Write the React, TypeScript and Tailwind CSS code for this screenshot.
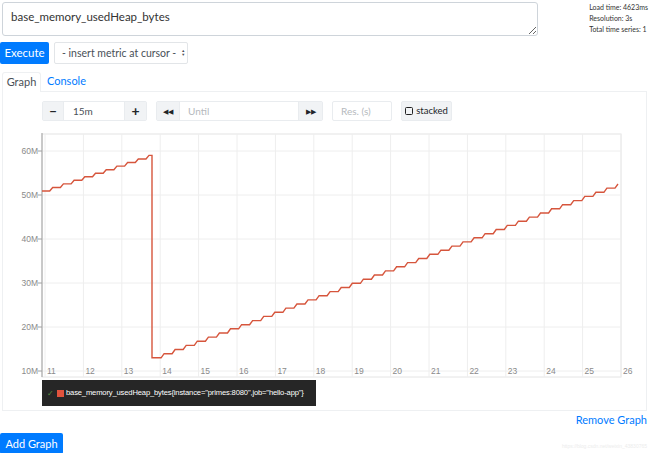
import React from "react";

const ui = { fontFamily: 'Lato, "Segoe UI", "Open Sans", sans-serif' };
const arial = '"Liberation Sans", Arial, sans-serif';

// page coords for the chart
const yOf = (m: number) => 371 - (m - 10) * 4.4;
const tickX = (k: number) => 44 + k * 38.4;

function stairs(x0: number, y0: number, x1: number, y1: number, n: number) {
  const w = (x1 - x0) / n;
  const dy = (y1 - y0) / n;
  let d = "";
  for (let i = 0; i < n; i++) {
    const x = x0 + i * w;
    const y = y0 + i * dy;
    d += ` L${(x + w - 3).toFixed(1)},${y.toFixed(1)} L${(x + w).toFixed(1)},${(y + dy).toFixed(1)}`;
  }
  return d;
}

function Chart() {
  const first = stairs(41, yOf(50.9), 148, yOf(59), 10);
  const second = stairs(152, yOf(13), 617, yOf(52.5), 42);
  const d = `M41,${yOf(50.9)}${first} L151,${yOf(59)} L151,${yOf(13)} L152,${yOf(13)}${second}`;
  const ys = [60, 50, 40, 30, 20, 10];
  const xs = Array.from({ length: 16 }, (_, k) => k);

  return (
    <svg width="640" height="250" viewBox="2 130 640 250" className="block shrink-0">
      <rect x="41" y="134" width="579" height="243" fill="none" stroke="#e4e4e4" />
      {ys.map((v) => (
        <line key={v} x1="41" x2="620" y1={yOf(v)} y2={yOf(v)} stroke="#eeeeee" />
      ))}
      {xs.map((k) => (
        <line key={k} x1={tickX(k)} x2={tickX(k)} y1="134" y2="377" stroke="#eeeeee" />
      ))}
      <line x1="41" x2="41" y1="133" y2="377" stroke="#a0a0a0" />
      {ys.map((v) => (
        <line key={"t" + v} x1="37" x2="41" y1={yOf(v)} y2={yOf(v)} stroke="#a0a0a0" />
      ))}
      {ys.map((v) => (
        <text
          key={"l" + v}
          x="37"
          y={yOf(v) + 3}
          textAnchor="end"
          fontSize="8.5"
          fill="#8a8a8a"
          fontFamily={arial}
        >
          {v}M
        </text>
      ))}
      {xs.map((k) => (
        <text
          key={"x" + k}
          x={tickX(k) + 2}
          y="374"
          fontSize="8.5"
          fill="#8a8a8a"
          fontFamily={arial}
        >
          {11 + k}
        </text>
      ))}
      <path d={d} fill="none" stroke="#d6553c" strokeWidth="1.4" />
    </svg>
  );
}

function GroupButton({ children, className = "" }: { children: React.ReactNode; className?: string }) {
  return (
    <div className={`flex items-center justify-center bg-[#f1f3f5] text-[#212529] ${className}`}>
      {children}
    </div>
  );
}

export default function App() {
  return (
    <div
      className="relative flex h-[453px] w-[650px] flex-col overflow-hidden bg-white leading-none text-[#212529]"
      style={ui}
    >
      {/* query row */}
      <div className="flex h-[36px] shrink-0">
        <textarea
          defaultValue="base_memory_usedHeap_bytes"
          className="ml-[2px] mt-[2px] block h-[34px] w-[536px] resize-y rounded-[3px] border border-[#ced4da] px-[8px] pt-[5px] text-[11.5px] leading-[18px] text-[#333] outline-none"
          style={ui}
        />
        <div className="ml-auto mr-[2px] mt-[2px] whitespace-nowrap text-[7px] leading-[11px] text-[#333]">
          <div>Load time: 4623ms</div>
          <div>Resolution: 3s</div>
          <div>Total time series: 1</div>
        </div>
      </div>

      <div className="mt-[6px] flex h-[22px] shrink-0 gap-[5px]">
        <button className="h-[22px] w-[49px] rounded-[2px] bg-[#007bff] text-[11.5px] text-white">
          Execute
        </button>
        <div className="flex h-[22px] w-[134px] items-center whitespace-nowrap rounded-[2px] border border-[#e2e5e8] pl-[7px] text-[10.5px] text-[#495057]">
          - insert metric at cursor -
          <span className="ml-[5px] flex flex-col text-[4px] leading-[4px]">
            <span>▲</span>
            <span>▼</span>
          </span>
        </div>
      </div>

      {/* tabs */}
      <div className="mt-[8px] flex h-[20px] shrink-0 pl-[2px]">
        <div className="h-[20px] w-[39px] rounded-t-[3px] border border-b-0 border-[#eef0f2] bg-white text-center text-[11px] leading-[18px] text-[#495057]">
          Graph
        </div>
        <div className="flex-1 border-b border-[#eef0f2] pl-[6px] text-[11px] leading-[18px] text-[#007bff]">
          Console
        </div>
        <div className="w-[3px]" />
      </div>

      <div className="ml-[2px] flex h-[319px] w-[645px] shrink-0 flex-col border border-t-0 border-[#eef0f2]">
        {/* controls */}
        <div className="ml-[39px] mt-[9px] flex h-[20px] shrink-0 text-[10px]">
          <div className="flex rounded-[2px] border border-[#e9ecef]">
            <GroupButton className="w-[20px] text-[13px] font-bold">−</GroupButton>
            <div className="flex w-[62px] items-center border-x border-[#e9ecef] pl-[9px] text-[#495057]">15m</div>
            <GroupButton className="w-[21px] text-[14px] font-bold">+</GroupButton>
          </div>
          <div className="ml-[9px] flex rounded-[2px] border border-[#e9ecef]">
            <GroupButton className="w-[22px] text-[7px]">◀◀</GroupButton>
            <div className="flex w-[120px] items-center border-x border-[#e9ecef] pl-[8px] text-[#b5b9bd]">Until</div>
            <GroupButton className="w-[23px] text-[7px]">▶▶</GroupButton>
          </div>
          <div className="ml-[9px] flex w-[60px] items-center rounded-[2px] border border-[#e9ecef] pl-[8px] text-[#b5b9bd]">
            Res. (s)
          </div>
          <div className="ml-[9px] flex w-[51px] items-center justify-center gap-[3px] rounded-[2px] border border-[#e9ecef] bg-[#f1f3f5] text-[9.5px] text-[#212529]">
            <span className="inline-block h-[8px] w-[8px] rounded-[1.5px] border-[1.5px] border-[#222]" />
            stacked
          </div>
        </div>

        <div className="mt-[9px] shrink-0">
          <Chart />
        </div>

        {/* legend */}
        <div className="ml-[39px] flex h-[26px] w-[274px] shrink-0 items-center bg-[#262626] pl-[5px]">
          <span className="text-[8px] text-[#5a8f3e]">✓</span>
          <span className="ml-[3px] inline-block h-[7px] w-[7px] bg-[#e0533d]" />
          <span
            className="ml-[2px] whitespace-nowrap text-[7.6px] tracking-[-0.15px] text-white"
            style={{ fontFamily: arial }}
          >
            base_memory_usedHeap_bytes{"{"}instance="primes:8080",job="hello-app"{"}"}
          </span>
        </div>
      </div>

      <div className="mt-[2px] h-[14px] shrink-0 pr-[3px] text-right text-[11px] leading-[14px] text-[#007bff]">
        Remove Graph
      </div>

      <div className="mt-[6px] flex shrink-0">
        <button className="h-[21px] w-[63px] rounded-[2px] bg-[#007bff] text-[11px] text-white">
          Add Graph
        </button>
      </div>

      <div className="absolute bottom-[4px] right-[3px] text-[5px] text-[#ececec]" style={{ fontFamily: arial }}>
        https://blog.csdn.net/weixin_43830765
      </div>
    </div>
  );
}
